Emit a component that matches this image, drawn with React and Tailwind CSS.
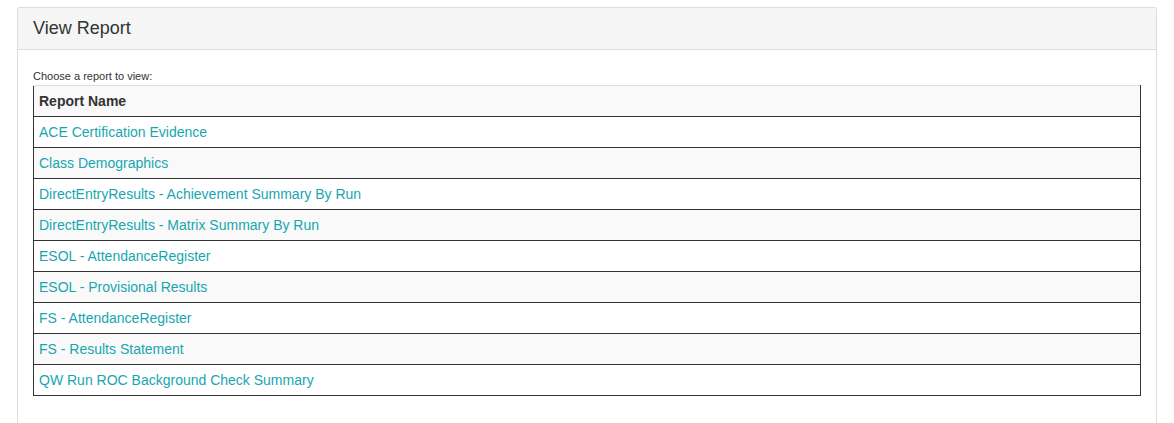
const REPORTS = [
  'ACE Certification Evidence',
  'Class Demographics',
  'DirectEntryResults - Achievement Summary By Run',
  'DirectEntryResults - Matrix Summary By Run',
  'ESOL - AttendanceRegister',
  'ESOL - Provisional Results',
  'FS - AttendanceRegister',
  'FS - Results Statement',
  'QW Run ROC Background Check Summary',
];

export default function App() {
  return (
    <div className="min-h-[423px] bg-white px-[17px] pt-[7px] font-['Liberation_Sans',Arial,sans-serif] text-[#333]">
      <div className="rounded-t-[3px] border border-b-0 border-[#ddd]">
        <div className="h-[42px] border-b border-[#ddd] bg-[#f5f5f5] px-[15px] pt-[9px] text-[18px] leading-[22px]">
          View Report
        </div>
        <div className="px-[15px] pt-[19px] pb-[27px]">
          <p className="mb-[1px] text-[11px] leading-[15px]">Choose a report to view:</p>
          <table className="w-full border-collapse text-[14px] leading-[20px]">
            <thead>
              <tr className="bg-[#f9f9f9]">
                <th className="h-[31px] border-x border-t border-b border-x-[#333] border-t-[#ddd] border-b-[#333] px-[5px] text-left font-bold">
                  Report Name
                </th>
              </tr>
            </thead>
            <tbody>
              {REPORTS.map((name, i) => (
                <tr key={name} className={i % 2 === 1 ? 'bg-[#f9f9f9]' : 'bg-white'}>
                  <td className="h-[31px] border border-[#333] px-[5px]">
                    <a href="#" className="text-[#17a6b0]">
                      {name}
                    </a>
                  </td>
                </tr>
              ))}
            </tbody>
          </table>
        </div>
      </div>
    </div>
  );
}
